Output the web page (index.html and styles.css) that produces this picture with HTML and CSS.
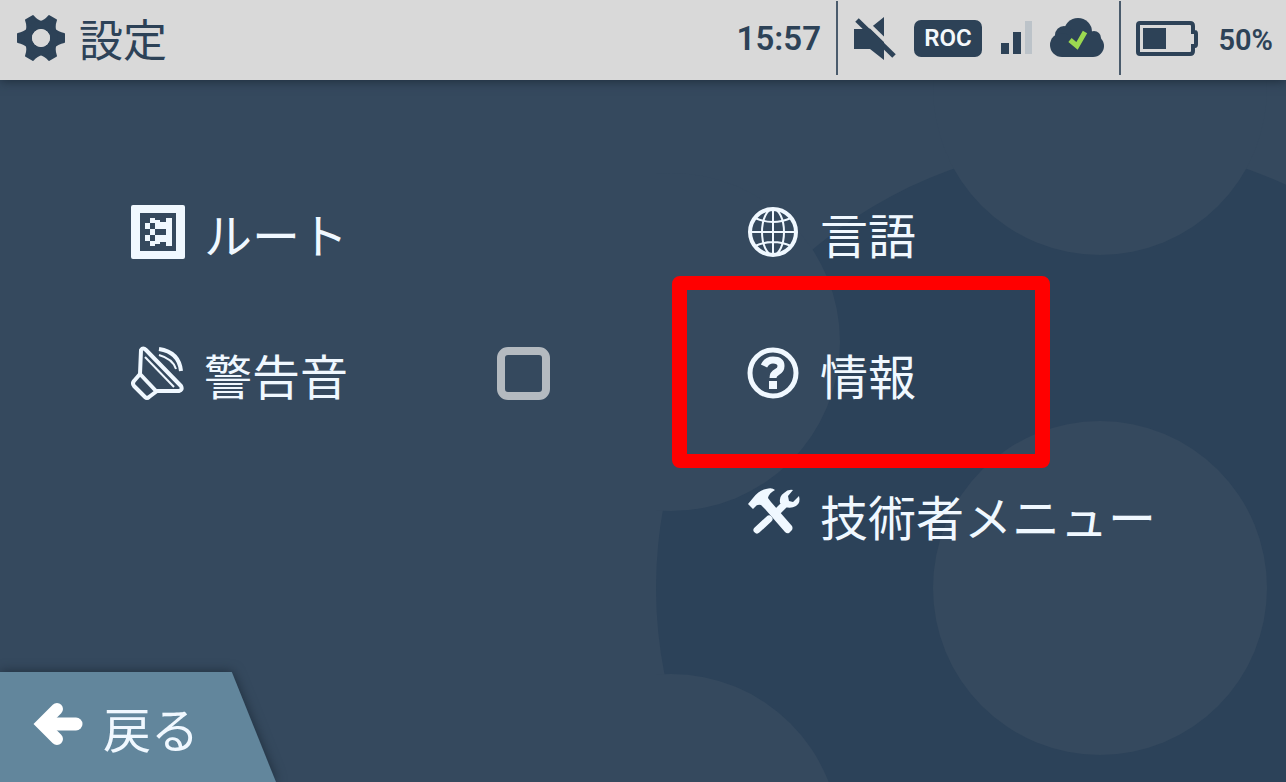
FILE: index.html
```html
<!DOCTYPE html>
<html lang="ja">
<head>
<meta charset="utf-8">
<meta name="viewport" content="width=device-width, initial-scale=1">
<title>設定</title>
<link rel="stylesheet" href="styles.css">
</head>
<body>
<div class="screen">
  <svg class="backdrop" viewBox="656 0 630 782" aria-hidden="true">
    <circle class="backdrop-gear" cx="1100" cy="588" r="444"/>
    <g class="backdrop-cut">
      <circle cx="1100" cy="588" r="167"/>
      <circle cx="1100" cy="88" r="167"/>
      <circle cx="671" cy="342" r="169"/>
      <circle cx="671" cy="843" r="169"/>
    </g>
  </svg>

  <header class="topbar">
    <h1 class="title">
      <svg class="title-icon" width="50" height="46" viewBox="-25 -23 50 46" aria-hidden="true">
        <defs><path id="tooth" d="M13-9Q17-5 23-4V4Q17 5 13 9z"/></defs>
        <g class="gear-teeth">
          <use href="#tooth"/><use href="#tooth" transform="rotate(60)"/><use href="#tooth" transform="rotate(120)"/>
          <use href="#tooth" transform="rotate(180)"/><use href="#tooth" transform="rotate(240)"/><use href="#tooth" transform="rotate(300)"/>
        </g>
        <circle class="gear-ring" r="13"/>
        <circle class="gear-hole" r="9"/>
      </svg>
      <span class="title-text">設定</span>
    </h1>
    <div class="status">
      <time class="clock">15:57</time>
      <span class="divider"></span>
      <div class="indicators">
        <svg width="43" height="43" viewBox="0 0 43 43" role="img" aria-label="ミュート">
          <path class="ink" d="M1 12H16L31 0V43L17 32H1z"/>
          <path class="mute-gap" d="M7-1L45 36"/>
          <path class="mute-slash" d="M4 3L41 39"/>
        </svg>
        <span class="badge">ROC</span>
        <svg width="32" height="34" viewBox="0 0 32 34" role="img" aria-label="電波">
          <path class="ink" d="M1 22h8v11H1zM13 11h8v22h-8z"/>
          <path class="bar-off" d="M25 0h7v33h-7z"/>
        </svg>
        <svg width="54" height="40" viewBox="0 0 54 40" role="img" aria-label="クラウド接続済み">
          <g class="ink">
            <circle cx="28" cy="14" r="14"/><circle cx="14" cy="17" r="9"/><circle cx="44" cy="20" r="7"/>
            <circle cx="12" cy="27" r="12"/><circle cx="43" cy="28" r="11"/><path d="M12 17H43V39H12z"/>
          </g>
          <path class="cloud-check" d="M20 22L27 28L35 14"/>
        </svg>
      </div>
      <span class="divider"></span>
      <svg width="62" height="35" viewBox="0 0 62 35" role="img" aria-label="バッテリー">
        <path class="battery-case" d="M4 2H54Q57 2 57 5V11H59Q60 11 60 13V23Q60 25 59 25H57V30Q57 33 54 33H4Q2 33 2 31V4Q2 2 4 2z"/>
        <path class="ink" d="M7 7H30V28H7z"/>
      </svg>
      <span class="percent">50%</span>
    </div>
  </header>

  <main class="menu">
    <div class="column">
      <button class="item" type="button">
        <svg class="icon" viewBox="0 0 54 54" aria-hidden="true">
          <path class="solid" fill-rule="evenodd" d="M2 0H52Q54 0 54 2V52Q54 54 52 54H2Q0 54 0 52V2Q0 0 2 0zM9 8V46H45V8z"/>
          <path class="solid" d="M35 13H41V41H35V37H24V30H35V24H24V17H35zM19 13H24V18H19zM14 18H19V24H14zM19 24H24V30H19zM14 30H19V36H14zM19 36H24V41H19zM24 15H29V18H24zM24 36H29V39H24z"/>
        </svg>
        <span class="label">ルート</span>
      </button>
      <div class="item item-toggle">
        <svg class="icon" viewBox="0 0 54 54" aria-hidden="true">
          <g class="line">
            <path d="M10 4Q12 1 15 4L50 40Q52 44 48 45L26 45L18 51Q16 53 14 51L3 40Q1 37 3 35L9 28z"/>
            <path d="M9 28L25 45"/>
            <path class="thin" d="M14 11L43 41"/>
            <path d="M28 3Q48 6 50 25"/>
            <path class="thin" d="M28 9Q42 13 45 23"/>
          </g>
        </svg>
        <label class="label" for="warning">警告音</label>
        <input class="check" id="warning" type="checkbox">
      </div>
    </div>
    <div class="column">
      <button class="item" type="button">
        <svg class="icon" viewBox="0 0 54 54" aria-hidden="true">
          <g class="line">
            <circle cx="26" cy="27" r="23"/>
            <g class="thin">
              <ellipse cx="26" cy="27" rx="11" ry="23"/>
              <path d="M26 4V50M3 27H49M8 13Q26 21 44 13M8 41Q26 33 44 41"/>
            </g>
          </g>
        </svg>
        <span class="label">言語</span>
      </button>
      <button class="item item-marked" type="button">
        <svg class="icon" viewBox="0 0 54 54" aria-hidden="true">
          <circle class="ring" cx="26" cy="27" r="23"/>
          <path class="query" d="M17 20Q20 14 26 14Q34 14 34 20Q34 24 30 26Q26 28 26 32"/>
          <path class="solid" d="M22 35H30V43H22z"/>
        </svg>
        <span class="label">情報</span>
      </button>
      <button class="item" type="button">
        <svg class="icon" viewBox="0 0 54 54" aria-hidden="true">
          <path class="handle" d="M10 43L22 32M31 24L38 17"/>
          <path class="solid" d="M46 3L41 9L42 14L46 15L52 9Q54 16 49 19Q44 22 38 20L33 16Q32 9 37 6Q41 2 46 3z"/>
          <path class="solid" d="M1 17L6 11Q12 3 19 2Q25 0 28 3Q22 6 21 11L24 15L45 39Q46 41 45 43L42 46Q40 47 38 45L18 22L14 18Q10 17 8 20L6 22z"/>
        </svg>
        <span class="label">技術者メニュー</span>
      </button>
    </div>
  </main>

  <footer class="footer">
    <button class="back" type="button">
      <svg width="50" height="44" viewBox="0 0 50 44" aria-hidden="true">
        <path class="arrow-head" d="M24 7L9 22L24 37"/>
        <path class="arrow-shaft" d="M12 22H43"/>
      </svg>
      <span class="back-text">戻る</span>
    </button>
  </footer>
</div>
</body>
</html>
```
FILE: styles.css
```css
:root {
  --bg: #35495e;
  --gear: #2c4259;
  --bar: #d9d9d9;
  --ink: #2d4257;
  --light: #f0f8ff;
}

*, *::after { box-sizing: border-box; }

body {
  margin: 0;
  font-family: Roboto, "Noto Sans CJK JP", sans-serif;
}

button {
  border: 0;
  background: none;
  font: inherit;
  color: inherit;
  text-align: left;
  cursor: pointer;
}

svg { display: block; flex: none; }

.screen {
  position: relative;
  z-index: 0;
  display: flex;
  flex-direction: column;
  min-height: 100vh;
  overflow: hidden;
  background: var(--bg);
  color: var(--light);
}

.backdrop {
  position: absolute;
  z-index: -1;
  top: 0;
  right: 0;
  width: 630px;
  height: 782px;
}
.backdrop-gear { fill: var(--gear); }
.backdrop-cut { fill: var(--bg); }

.topbar {
  display: flex;
  align-items: center;
  justify-content: space-between;
  height: 80px;
  padding: 0 13px 4px 16px;
  background: var(--bar);
  color: var(--ink);
  box-shadow: 0 1px 10px #1d2c3a;
}

.title {
  display: flex;
  align-items: center;
  gap: 13px;
  margin: 0;
  font-size: 44px;
  font-weight: 400;
  line-height: 64px;
}
.title-text { padding-top: 8px; }

.gear-teeth { fill: var(--ink); stroke: var(--ink); stroke-width: 2; stroke-linejoin: round; }
.gear-ring { fill: none; stroke: var(--ink); stroke-width: 8; }
.gear-hole { fill: var(--bar); }

.status {
  display: flex;
  align-items: center;
  gap: 15px;
  font-weight: 600;
}
.indicators { display: flex; align-items: center; gap: 18px; }
.clock { font-size: 33px; }
.percent { min-width: 60px; padding-top: 4px; font-size: 29px; text-align: right; }
.divider { width: 2px; height: 74px; background: #4a5b6c; }

.badge {
  width: 68px;
  border-radius: 7px;
  background: var(--ink);
  color: #f4f8fb;
  font-size: 24px;
  line-height: 37px;
  text-align: center;
}

.ink { fill: var(--ink); }
.bar-off { fill: #bcc3c9; }
.mute-gap { stroke: var(--bar); stroke-width: 4; }
.mute-slash { stroke: var(--ink); stroke-width: 5; }
.cloud-check { fill: none; stroke: #9bd850; stroke-width: 5; }
.battery-case { fill: none; stroke: var(--ink); stroke-width: 4; }

.menu {
  flex: 1;
  display: grid;
  grid-template-columns: 8fr 7fr;
  align-items: start;
  padding: 116px 0 40px 131px;
}

.column {
  display: flex;
  flex-direction: column;
  align-items: flex-start;
  gap: 69px;
}

.item {
  position: relative;
  display: flex;
  align-items: center;
  gap: 19px;
  height: 72px;
  padding: 0;
  font-size: 48px;
  line-height: 60px;
  white-space: nowrap;
}
.item-toggle { width: 68%; }

.item-marked::after {
  content: "";
  position: absolute;
  top: -61px;
  left: -75px;
  width: 378px;
  height: 192px;
  border: solid #f00;
  border-width: 14px 15px;
  border-radius: 8px;
}

.icon { width: 54px; height: 54px; }
.label { display: block; padding-top: 12px; }

.solid { fill: var(--light); }
.line { fill: none; stroke: var(--light); stroke-width: 4; stroke-linejoin: round; }
.thin { stroke-width: 2; }
.ring { fill: none; stroke: var(--light); stroke-width: 5; }
.query { fill: none; stroke: var(--light); stroke-width: 7; }
.handle { fill: none; stroke: var(--light); stroke-width: 7; stroke-linecap: round; }

.check {
  appearance: none;
  width: 53px;
  height: 53px;
  margin: 0 0 0 auto;
  border: 8px solid #b4bac0;
  border-radius: 11px;
  background: transparent;
}
.check:checked { background: var(--light); background-clip: content-box; padding: 6px; }

.footer {
  display: flex;
  filter: drop-shadow(0 0 6px #1d2c3a);
}

.back {
  display: flex;
  align-items: center;
  gap: 20px;
  width: 276px;
  height: 110px;
  padding: 0 0 6px 33px;
  background: #62869c;
  clip-path: polygon(0 0, 84% 0, 100% 100%, 0 100%);
  font-size: 48px;
}
.back-text { padding-top: 6px; }
.arrow-head { fill: none; stroke: #fff; stroke-width: 12; stroke-linecap: round; }
.arrow-shaft { stroke: #fff; stroke-width: 13; stroke-linecap: round; }
```
